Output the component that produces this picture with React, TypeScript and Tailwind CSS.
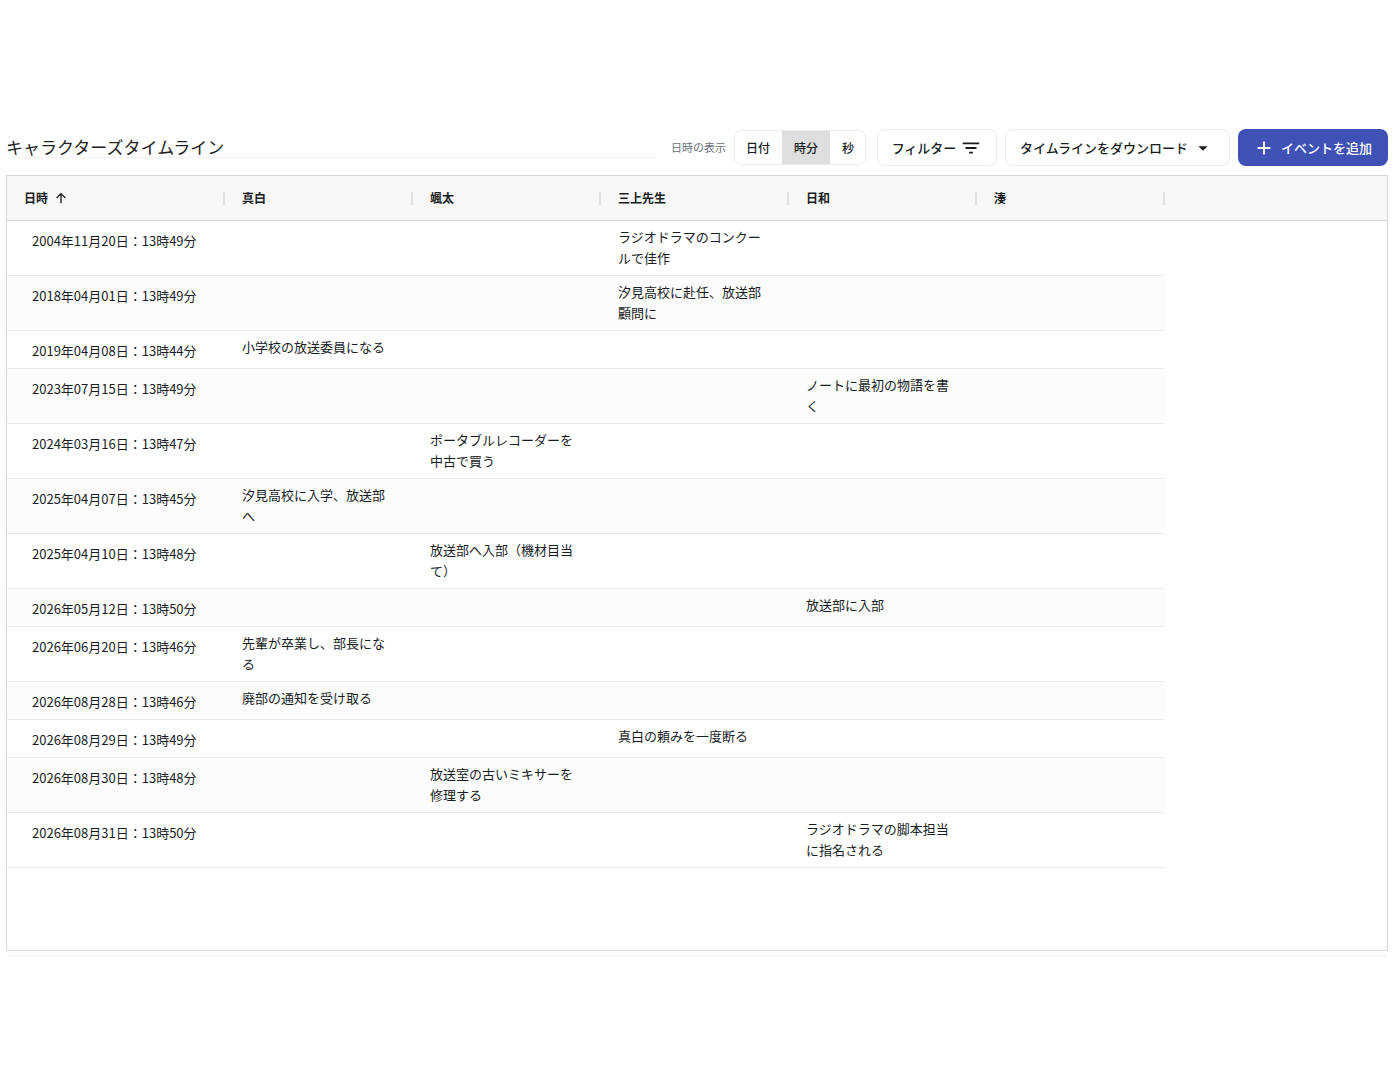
import React, { useState } from 'react';

interface TimelineEvent {
  date: string;
  character: string;
  text: string;
}

const CHARACTERS = ['真白', '颯太', '三上先生', '日和', '湊'];
const UNITS = ['日付', '時分', '秒'];

const EVENTS: TimelineEvent[] = [
  { date: '2004年11月20日：13時49分', character: '三上先生', text: 'ラジオドラマのコンクールで佳作' },
  { date: '2018年04月01日：13時49分', character: '三上先生', text: '汐見高校に赴任、放送部顧問に' },
  { date: '2019年04月08日：13時44分', character: '真白', text: '小学校の放送委員になる' },
  { date: '2023年07月15日：13時49分', character: '日和', text: 'ノートに最初の物語を書く' },
  { date: '2024年03月16日：13時47分', character: '颯太', text: 'ポータブルレコーダーを中古で買う' },
  { date: '2025年04月07日：13時45分', character: '真白', text: '汐見高校に入学、放送部へ' },
  { date: '2025年04月10日：13時48分', character: '颯太', text: '放送部へ入部（機材目当て）' },
  { date: '2026年05月12日：13時50分', character: '日和', text: '放送部に入部' },
  { date: '2026年06月20日：13時46分', character: '真白', text: '先輩が卒業し、部長になる' },
  { date: '2026年08月28日：13時46分', character: '真白', text: '廃部の通知を受け取る' },
  { date: '2026年08月29日：13時49分', character: '三上先生', text: '真白の頼みを一度断る' },
  { date: '2026年08月30日：13時48分', character: '颯太', text: '放送室の古いミキサーを修理する' },
  { date: '2026年08月31日：13時50分', character: '日和', text: 'ラジオドラマの脚本担当に指名される' },
];

const Toolbar: React.FC = () => {
  const [unit, setUnit] = useState('時分');

  return (
    <header className="flex items-center">
      <h1 className="flex-1 border-b border-[#f3f3f3] text-[17px] leading-5 text-[#222]">キャラクターズタイムライン</h1>
      <span id="unit-label" className="ml-[15px] text-[11px] text-[#6b7280]">
        日時の表示
      </span>
      <div
        role="group"
        aria-labelledby="unit-label"
        className="ml-2 flex h-[35px] overflow-hidden rounded-lg border border-[#ebebeb]"
      >
        {UNITS.map(u => (
          <button
            key={u}
            aria-pressed={u === unit}
            onClick={() => setUnit(u)}
            className={`px-3 text-xs font-medium first:pl-[11px] last:pr-[11px] ${u === unit ? 'bg-[#dedede]' : 'bg-white'}`}
          >
            {u}
          </button>
        ))}
      </div>
      <button className="ml-[11px] flex h-[37px] w-[120px] items-center justify-center gap-1 rounded-lg border border-[#ebebeb] bg-white text-[13px] font-medium">
        フィルター
        <svg viewBox="0 0 24 24" className="size-[22px]" fill="currentColor" aria-hidden="true">
          <path d="M10 18h4v-2h-4zM3 6v2h18V6zm3 7h12v-2H6z" />
        </svg>
      </button>
      <button className="ml-2 flex h-[37px] w-[225px] items-center gap-1 rounded-lg border border-[#ebebeb] bg-white pl-3.5 text-[13px] font-medium">
        タイムラインをダウンロード
        <svg viewBox="0 0 24 24" className="size-[22px]" fill="currentColor" aria-hidden="true">
          <path d="m7 10 5 5 5-5z" />
        </svg>
      </button>
      <button className="ml-2 flex h-[37px] w-[150px] items-center justify-end gap-1.5 rounded-lg bg-[#3f51b5] pr-4 text-[13px] font-medium text-white">
        <svg viewBox="0 0 24 24" className="size-[22px]" fill="currentColor" aria-hidden="true">
          <path d="M19 13h-6v6h-2v-6H5v-2h6V5h2v6h6z" />
        </svg>
        イベントを追加
      </button>
    </header>
  );
};

const Separator: React.FC = () => <span className="h-[13px] w-0.5 bg-[#dfe2e5]" />;

const TimelineTable: React.FC = () => (
  <table className="w-full table-fixed border-separate border-spacing-0 text-left">
    <colgroup>
      <col className="w-[218px]" />
      {CHARACTERS.map(name => (
        <col key={name} className="w-[188px]" />
      ))}
      <col />
    </colgroup>
    <thead>
      <tr className="h-[45px] bg-[#f7f7f7] text-xs">
        <th scope="col" aria-sort="ascending" className="border-b border-[#d5d8da] pl-[17px] font-bold">
          <div className="flex items-center justify-between">
            <button className="flex items-center gap-1.5">
              日時
              <svg viewBox="0 0 16 16" className="size-3.5" fill="none" stroke="currentColor" strokeWidth="1.5" aria-hidden="true">
                <path d="M8 14V3M3 8l5-5 5 5" />
              </svg>
            </button>
            <Separator />
          </div>
        </th>
        {CHARACTERS.map(name => (
          <th key={name} scope="col" className="border-b border-[#d5d8da] pl-[17px] font-bold">
            <div className="flex items-center justify-between">
              {name}
              <Separator />
            </div>
          </th>
        ))}
        <td className="border-b border-[#d5d8da]" />
      </tr>
    </thead>
    <tbody>
      {EVENTS.map((event, i) => {
        const cell = `border-b border-[#e9ecee] align-top ${i % 2 ? 'bg-[#fcfcfc]' : 'bg-white'}`;
        return (
          <tr key={event.date} className="h-[38px] text-[13px] leading-[21px]">
            <td className={`${cell} pt-[9px] pl-[25px] whitespace-nowrap`}>{event.date}</td>
            {CHARACTERS.map(name => (
              <td key={name} className={`${cell} px-[17px] pt-[5px] pb-[7px] break-all`}>
                {name === event.character ? event.text : ''}
              </td>
            ))}
            <td />
          </tr>
        );
      })}
    </tbody>
  </table>
);

export default function App() {
  return (
    <main
      lang="ja"
      className="min-h-screen bg-white pt-[129px] pr-2.5 pl-1.5 font-['Noto_Sans_CJK_JP',sans-serif] text-[#181d1f]"
    >
      <Toolbar />
      <div className="mt-[9px] border border-[#d5d8da] pb-[82px]">
        <TimelineTable />
      </div>
      <div className="mx-0.5 mt-1 h-px bg-[#f0f0f0]" />
    </main>
  );
}
